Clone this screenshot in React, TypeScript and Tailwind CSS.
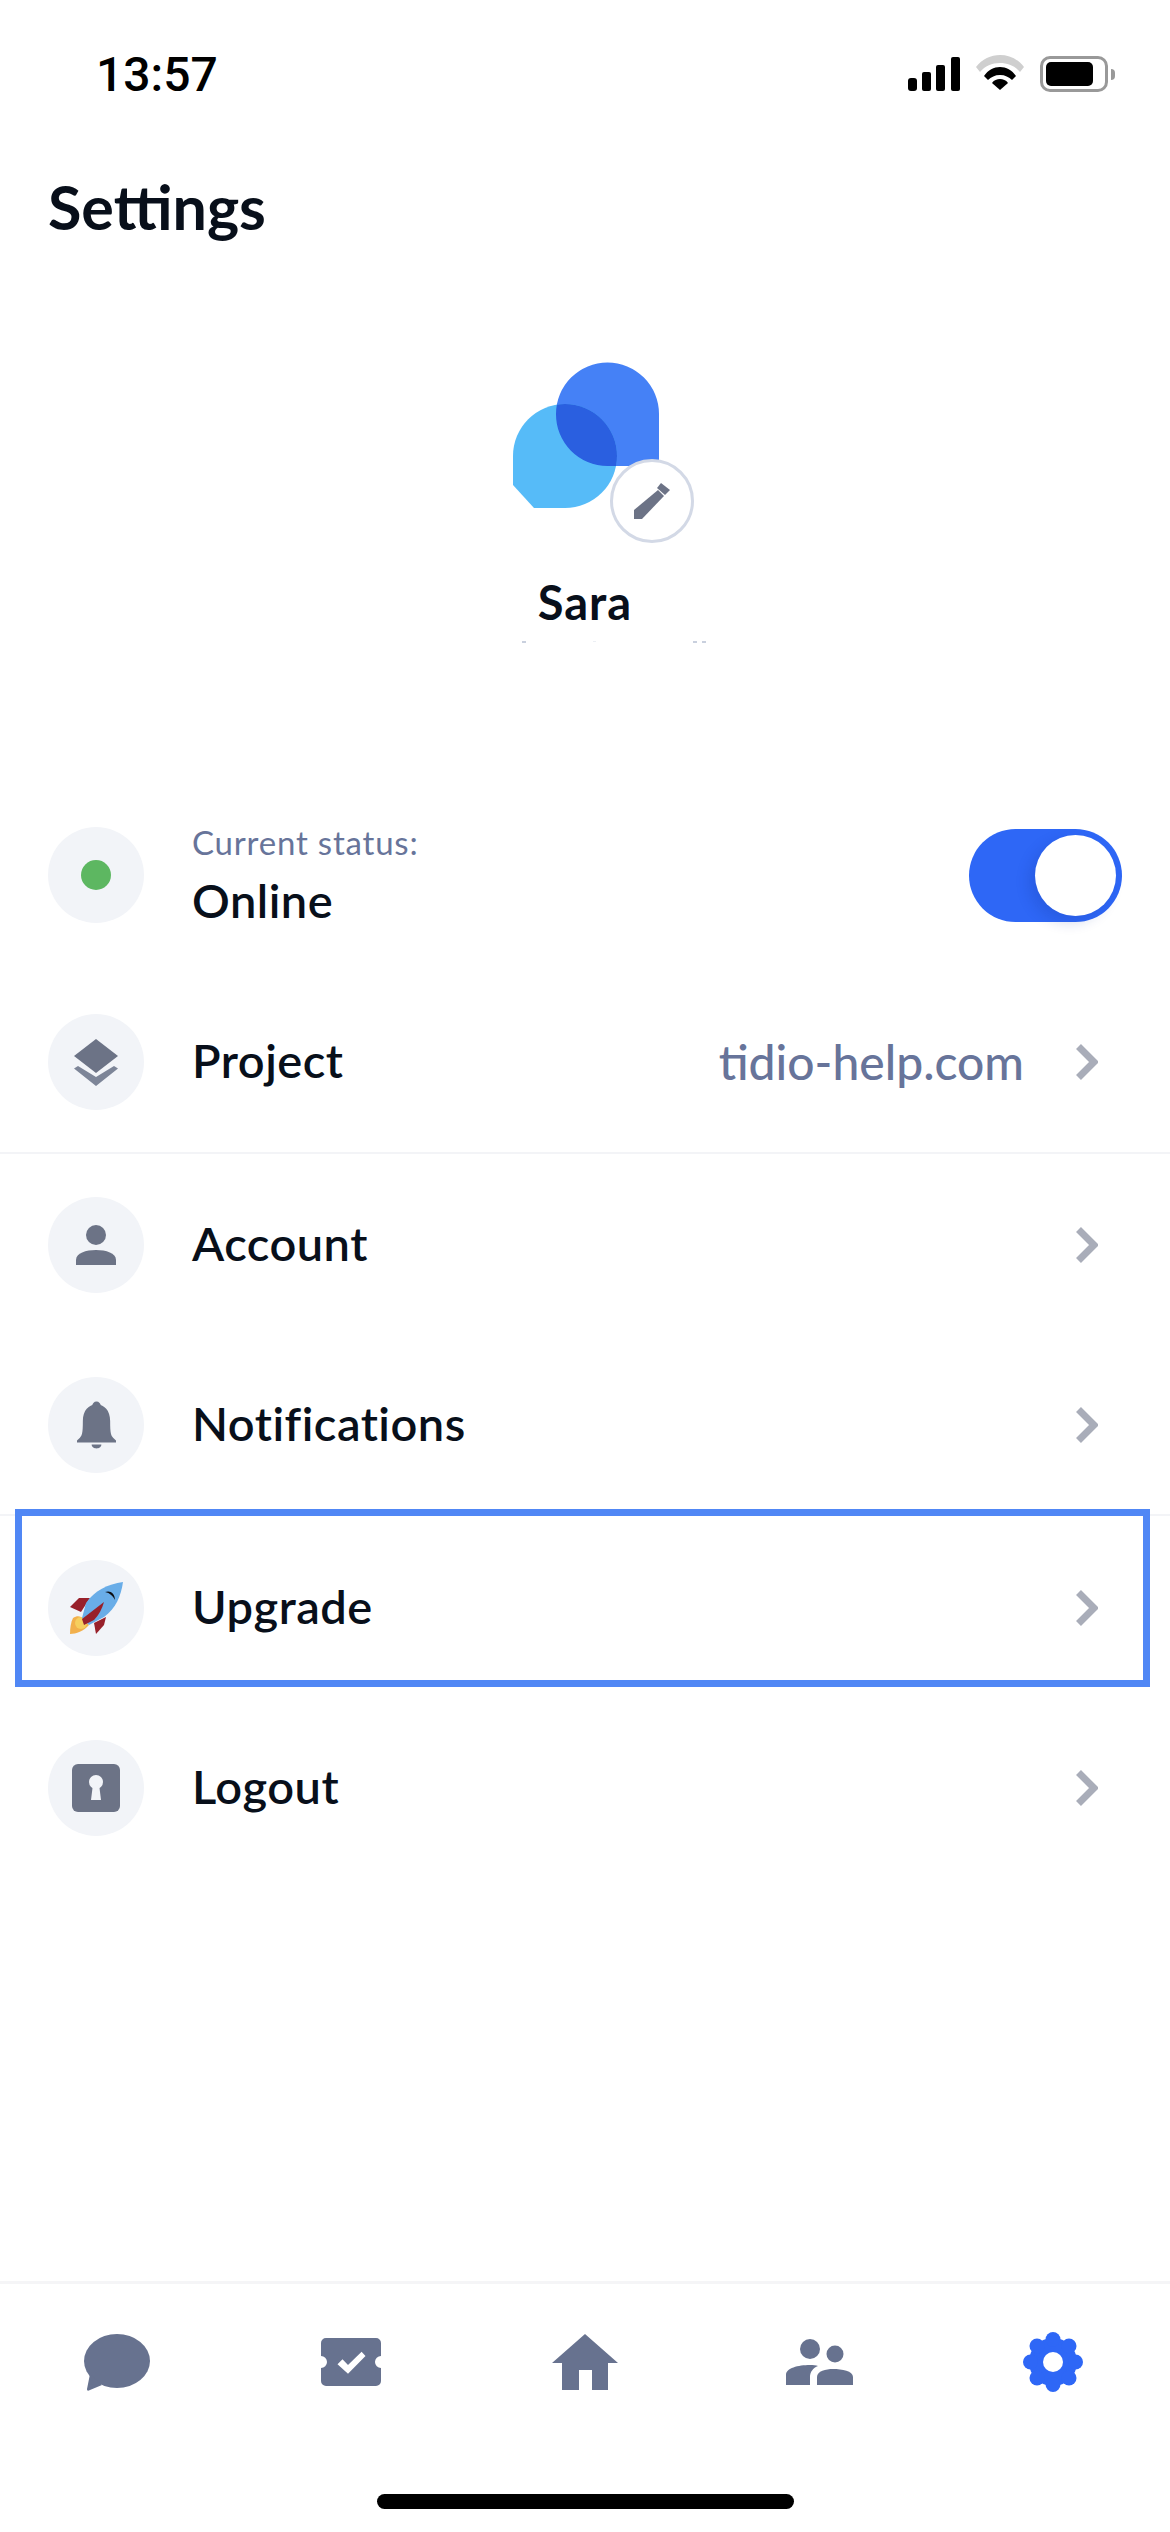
import type { ReactNode } from "react";

const Chevron = () => (
  <svg width="22" height="36" viewBox="0 0 22 36" fill="none">
    <path d="M2.5 2.5 18 18 2.5 33.5" stroke="#a9adb9" strokeWidth="7" />
  </svg>
);

const IconCircle = ({ children }: { children: ReactNode }) => (
  <div className="flex h-24 w-24 shrink-0 items-center justify-center rounded-full bg-[#f2f4f8]">
    {children}
  </div>
);

const Layers = () => (
  <svg width="44" height="47" viewBox="0 0 44 47">
    <path d="M22 0 44 17 22 34 0 17Z" fill="#6c7386" />
    <path d="M0 29.5 4 27 22 38 40 27 44 29.5 22 47Z" fill="#7d8598" />
  </svg>
);

const Person = () => (
  <svg width="40" height="40" viewBox="0 0 40 40" fill="#6c7386">
    <circle cx="20" cy="10" r="10" />
    <path d="M0 40V35C0 28 10 25 20 25S40 28 40 35V40Z" />
  </svg>
);

const Bell = () => (
  <svg width="39" height="48" viewBox="0 0 40 48" fill="#6c7386">
    <circle cx="20" cy="4.5" r="4.5" />
    <path d="M0 40 3 37C5 35 6 33 6 20 6 9 12 3 20 3S34 9 34 20C34 33 35 35 37 37L40 40V42H0Z" />
    <path d="M15 44H25C25 47 22 48 20 48S15 47 15 44Z" />
  </svg>
);

const Rocket = () => (
  <svg width="53" height="52" viewBox="0 0 53 52">
    <path d="M0 52C0 46 1 40 3 36 6 34 9 34 11 35L19 43C14 49 6 52 0 52Z" fill="#f2b04c" />
    <circle cx="11" cy="41" r="6" fill="#f6cf5e" />
    <path d="M0 25 9 16 20 16 11 30Z" fill="#98202a" />
    <path d="M24 41 36 35 34 43 26 52Z" fill="#98202a" />
    <path d="M53 0C38 2 24 9 16 21L12 36 19 43 34 35C46 26 51 14 53 0Z" fill="#69ade8" />
    <path d="M34 20 12 37 14 43 24 38C29 33 32 27 34 20Z" fill="#98202a" />
    <path d="M35 10C40 8 45 11 45 18 43 14 40 11 35 10Z" fill="#0d0d12" />
  </svg>
);

const Keyhole = () => (
  <svg width="48" height="48" viewBox="0 0 48 48">
    <rect width="48" height="48" rx="6" fill="#6c7386" />
    <circle cx="24" cy="18" r="7" fill="#f2f4f8" />
    <path d="M21 20H27L29 36H19Z" fill="#f2f4f8" />
  </svg>
);

const Chat = () => (
  <svg width="66" height="57" viewBox="0 0 66 57" fill="#67728f">
    <ellipse cx="33" cy="27" rx="33" ry="27" />
    <path d="M6 40 3 55C3 57 4 57 6 56L18 51Z" />
  </svg>
);

const Ticket = () => (
  <svg width="60" height="48" viewBox="0 0 60 48">
    <path
      fill="#67728f"
      fillRule="evenodd"
      d="M5 0H55A5 5 0 0 1 60 5V18A6 6 0 0 0 60 30V43A5 5 0 0 1 55 48H5A5 5 0 0 1 0 43V30A6 6 0 0 0 0 18V5A5 5 0 0 1 5 0ZM16.5 26.3 27 35.7 44.5 18 40.6 13.7 27 27 21.5 21.3Z"
    />
  </svg>
);

const House = () => (
  <svg width="66" height="56" viewBox="0 0 66 56" fill="#67728f">
    <path d="M33 0 66 29H56V56H40V36H27V56H10V29H0Z" />
  </svg>
);

const People = () => (
  <svg width="67" height="46" viewBox="0 0 67 46" fill="#67728f">
    <circle cx="24" cy="10" r="10" />
    <circle cx="49" cy="15" r="8.5" />
    <path d="M0 46V36C0 29 12 26 24 26 27 26 30 26 32 27 27 29 24 33 24 38V46Z" />
    <path d="M31 46V38C31 32 40 30 47 30 56 30 67 32 67 38V46Z" />
  </svg>
);

const Gear = () => (
  <svg width="60" height="60" viewBox="0 0 60 60" fill="#2e67f6">
    <circle cx="30" cy="30" r="24" />
    <circle cx="30" cy="7.5" r="7.5" />
    <circle cx="30" cy="52.5" r="7.5" />
    <circle cx="7.5" cy="30" r="7.5" />
    <circle cx="52.5" cy="30" r="7.5" />
    <circle cx="14" cy="14" r="7.5" />
    <circle cx="46" cy="14" r="7.5" />
    <circle cx="14" cy="46" r="7.5" />
    <circle cx="46" cy="46" r="7.5" />
    <circle cx="30" cy="30" r="10" fill="#fff" />
  </svg>
);

const Logo = () => (
  <svg width="146" height="146" viewBox="0 0 146 146">
    <defs>
      <clipPath id="dark-bubble">
        <path d="M43 52A51.5 51.5 0 0 1 146 52V104H94.5A51.5 51.5 0 0 1 43 52Z" />
      </clipPath>
    </defs>
    <path d="M43 52A51.5 51.5 0 0 1 146 52V104H94.5A51.5 51.5 0 0 1 43 52Z" fill="#4581f6" />
    <path d="M0 94A52 52 0 0 1 104 94 52 52 0 0 1 52 146H21L0 123Z" fill="#56bbf8" />
    <path d="M0 94A52 52 0 0 1 104 94 52 52 0 0 1 52 146H21L0 123Z" fill="#2a5fe0" clipPath="url(#dark-bubble)" />
  </svg>
);

export default function App() {
  return (
    <div className="flex h-[2532px] w-[1170px] flex-col overflow-hidden bg-white font-['Lato',sans-serif] text-[#080f1a]">
      <div className="flex h-[148px] shrink-0 items-start justify-between pl-[96px] pr-[55px] pt-[53px]">
        <span className="font-['Roboto',sans-serif] text-[48px] leading-[44px] font-medium text-black">13:57</span>
        <div className="flex items-start gap-[16px] pt-[4px]">
          <svg width="52" height="34" viewBox="0 0 52 34" fill="#000">
            <rect y="21" width="9" height="13" rx="3" />
            <rect x="14" y="15" width="9" height="19" rx="2" />
            <rect x="28" y="8" width="9" height="26" rx="2" />
            <rect x="43" width="9" height="34" rx="2" />
          </svg>
          <svg width="48" height="35" viewBox="0 0 48 35" className="-mt-[2px]">
            <path d="M0 12C6 4 15 0 24 0S42 4 48 12L44 17C39 11 32 8 24 8S9 11 4 17Z" fill="#cfcfcf" />
            <path d="M8 21C12 15 18 12 24 12S36 15 40 21L36 25C33 22 29 20 24 20S15 22 12 25Z" fill="#000" />
            <path d="M16 28C18 25 21 24 24 24S30 25 32 28L24 35Z" fill="#000" />
          </svg>
          <div className="-mt-[1px] flex items-center gap-[3px]">
            <div className="flex h-[36px] w-[68px] items-center rounded-[10px] border-[3px] border-[#999] bg-white pl-[3px]">
              <div className="h-[24px] w-[47px] rounded-[5px] bg-black" />
            </div>
            <div className="h-[11px] w-[4px] rounded-r-full bg-[#999]" />
          </div>
        </div>
      </div>

      <h1 className="ml-[48px] mt-[29px] text-[61px] leading-[60px] font-bold">Settings</h1>

      <div className="flex flex-col items-center pt-[125px]">
        <div className="relative ml-[36px] h-[180px] w-[181px]">
          <Logo />
          <div className="absolute left-[97px] top-[97px] flex h-[84px] w-[84px] items-center justify-center rounded-full border-[3px] border-[#d3d9e6] bg-white">
            <svg width="36" height="36" viewBox="0 0 36 36" fill="#6c7386">
              <path d="M0 27 24 7 30 13 8 36H0Z" />
              <path d="M27 0 36 7 31 12 23 5Z" />
            </svg>
          </div>
        </div>
        <div className="mt-[37px] text-[47px] leading-[46px] font-bold tracking-[1px]">Sara</div>
        <div className="ml-[58px] mt-[16px] flex h-[4px] w-[184px] items-start">
          <span className="h-[2px] w-[4px] bg-[#c9d0de]" />
          <span className="ml-[67px] h-[1px] w-[3px] bg-[#eceff4]" />
          <span className="ml-[97px] h-[2px] w-[4px] bg-[#c9d0de]" />
          <span className="ml-[5px] h-[2px] w-[4px] bg-[#c9d0de]" />
        </div>
      </div>

      <div className="mt-[182px] flex flex-1 flex-col">
        <div className="flex h-[96px] items-center pl-[48px] pr-[48px]">
          <IconCircle>
            <div className="h-[30px] w-[30px] rounded-full bg-[#5db761]" />
          </IconCircle>
          <div className="ml-[48px] flex-1">
            <div className="text-[33px] leading-[36px] tracking-[0.8px] text-[#67749a]">Current status:</div>
            <div className="mt-[14px] text-[47px] leading-[52px] tracking-[0.5px] font-semibold">Online</div>
          </div>
          <div className="flex h-[93px] w-[153px] items-center justify-end rounded-full bg-[#2e67f6] pr-[6px]">
            <div className="h-[81px] w-[81px] rounded-full bg-white shadow-[-6px_6px_14px_rgba(20,50,150,0.2)]" />
          </div>
        </div>

        <Row className="mt-[91px]" icon={<Layers />} label="Project" value="tidio-help.com" />
        <div className="mt-[42px] h-[2px] bg-[#f3f4f7]" />
        <Row className="mt-[43px]" icon={<Person />} label="Account" />
        <Row className="mt-[84px]" icon={<Bell />} label="Notifications" />
        <div className="mt-[41px] h-[2px] bg-[#f3f4f7]" />
        <div className="relative">
          <div className="absolute left-[15px] top-[-7px] h-[178px] w-[1135px] border-[7px] border-[#5087f5]" />
          <Row className="mt-[44px]" icon={<Rocket />} label="Upgrade" />
        </div>
        <Row className="mt-[84px]" icon={<Keyhole />} label="Logout" />
      </div>

      <div className="h-[251px] shrink-0 border-t-[3px] border-[#f5f5f7]">
        <div className="flex items-center pt-[48px]">
          <div className="flex flex-1 justify-center"><Chat /></div>
          <div className="flex flex-1 justify-center"><Ticket /></div>
          <div className="flex flex-1 justify-center"><House /></div>
          <div className="flex flex-1 justify-center"><People /></div>
          <div className="flex flex-1 justify-center"><Gear /></div>
        </div>
        <div className="mx-auto mt-[102px] h-[15px] w-[417px] rounded-full bg-black" />
      </div>
    </div>
  );
}

function Row({ icon, label, value, className }: { icon: ReactNode; label: string; value?: string; className?: string }) {
  return (
    <div className={`flex h-[96px] items-center pl-[48px] pr-[72px] ${className ?? ""}`}>
      <IconCircle>{icon}</IconCircle>
      <span className="ml-[48px] flex-1 -translate-y-[2px] text-[47px] tracking-[0.5px] font-semibold">{label}</span>
      {value && <span className="mr-[52px] text-[48px] font-medium text-[#67749a]">{value}</span>}
      <Chevron />
    </div>
  );
}
